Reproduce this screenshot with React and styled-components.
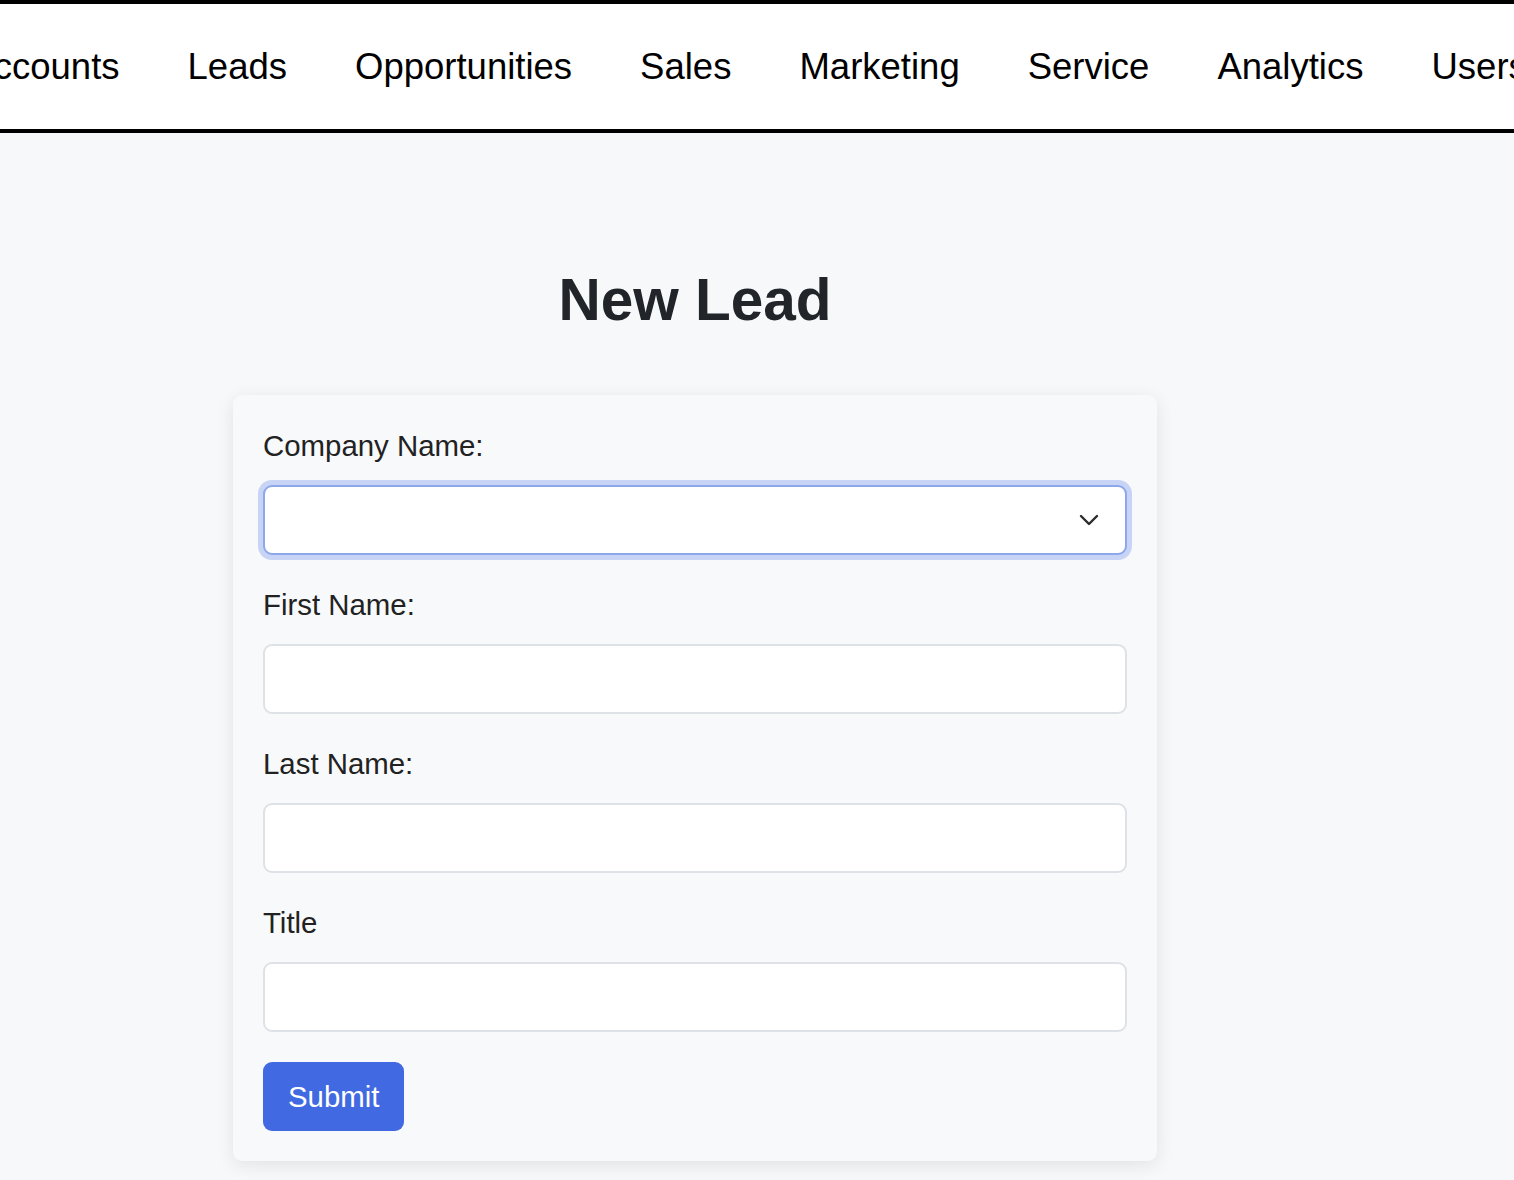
import React, { useLayoutEffect, useRef } from "react";
import styled, { createGlobalStyle } from "styled-components";

const navItems = [
  "Home",
  "Contacts",
  "Accounts",
  "Leads",
  "Opportunities",
  "Sales",
  "Marketing",
  "Service",
  "Analytics",
  "Users",
  "Settings"
];

const fields = [
  { key: "first", label: "First Name:" },
  { key: "last", label: "Last Name:" },
  { key: "title", label: "Title" }
];

const App = () => {
  const scrollerRef = useRef(null);
  const accountsRef = useRef(null);

  // the nav is scrolled so that "Accounts" is partly hidden on the left
  useLayoutEffect(() => {
    const scroller = scrollerRef.current;
    const item = accountsRef.current;
    if (!scroller || !item) return;
    const delta =
      item.getBoundingClientRect().left - scroller.getBoundingClientRect().left;
    scroller.scrollLeft = scroller.scrollLeft + delta + 34 + 31;
  }, []);

  return (
    <>
      <GlobalStyle />
      <NavBar ref={scrollerRef}>
        <NavList>
          {navItems.map((item) => (
            <NavItem key={item} ref={item === "Accounts" ? accountsRef : null}>
              {item}
            </NavItem>
          ))}
        </NavList>
      </NavBar>
      <Main>
        <Title>New Lead</Title>
        <Card onSubmit={(e) => e.preventDefault()}>
          <Field>
            <Label htmlFor="company">Company Name:</Label>
            <SelectWrap>
              <Select id="company" defaultValue="">
                <option value=""></option>
              </Select>
              <Chevron viewBox="0 0 20 12" aria-hidden="true">
                <path
                  d="M2 2 L10 10 L18 2"
                  fill="none"
                  stroke="#2b2b2b"
                  strokeWidth="2.4"
                  strokeLinecap="round"
                  strokeLinejoin="round"
                />
              </Chevron>
            </SelectWrap>
          </Field>
          {fields.map((f) => (
            <Field key={f.key}>
              <Label htmlFor={f.key}>{f.label}</Label>
              <Input id={f.key} type="text" />
            </Field>
          ))}
          <SubmitButton type="submit">Submit</SubmitButton>
        </Card>
      </Main>
    </>
  );
};

const GlobalStyle = createGlobalStyle`
  body {
    margin: 0;
    background: #f7f8fa;
    font-family: "Liberation Sans", Arial, Helvetica, sans-serif;
    color: #212529;
  }
`;

const NavBar = styled.nav`
  background: #fff;
  border-top: 4px solid #000;
  border-bottom: 4px solid #000;
  overflow: hidden;
`;

const NavList = styled.ul`
  display: flex;
  list-style: none;
  margin: 0;
  padding: 0;
  width: max-content;
`;

const NavItem = styled.li`
  padding: 0 34px;
  font-size: 36.5px;
  line-height: 125px;
  color: #000;
  white-space: nowrap;
`;

const Main = styled.main`
  max-width: 1390px;
  padding: 133px 0 40px;
`;

const Title = styled.h1`
  margin: 0 0 62px;
  text-align: center;
  font-size: 58.5px;
  line-height: 67px;
  font-weight: 700;
  color: #212529;
`;

const Card = styled.form`
  width: 924px;
  box-sizing: border-box;
  margin: 0 auto;
  padding: 33px 30px 30px;
  background: #f8f9fb;
  border-radius: 9px;
  box-shadow: 0 4px 18px rgba(0, 0, 0, 0.09);
`;

const Field = styled.div`
  display: flex;
  flex-direction: column;
  margin-bottom: 32px;

  &:last-of-type {
    margin-bottom: 30px;
  }
`;

const Label = styled.label`
  font-size: 29.4px;
  line-height: 36px;
  color: #222;
  margin-bottom: 21px;
`;

const SelectWrap = styled.div`
  position: relative;
`;

const Select = styled.select`
  appearance: none;
  width: 100%;
  height: 70px;
  box-sizing: border-box;
  background: #fff;
  border: 2px solid #8ea6ea;
  border-radius: 9px;
  box-shadow: 0 0 0 5px #c7d4f5;
  font-family: inherit;
  font-size: 29px;
  padding: 0 20px;
  outline: none;
`;

const Chevron = styled.svg`
  position: absolute;
  right: 28px;
  top: 29px;
  width: 20px;
  height: 12px;
  pointer-events: none;
`;

const Input = styled.input`
  width: 100%;
  height: 70px;
  box-sizing: border-box;
  background: #fff;
  border: 2px solid #dee2e6;
  border-radius: 9px;
  font-family: inherit;
  font-size: 29px;
  padding: 0 20px;
  outline: none;
`;

const SubmitButton = styled.button`
  height: 69px;
  padding: 0 25px;
  background: #4169e1;
  color: #fff;
  border: none;
  border-radius: 9px;
  font-family: inherit;
  font-size: 29.4px;
  cursor: pointer;
`;

export default App;
